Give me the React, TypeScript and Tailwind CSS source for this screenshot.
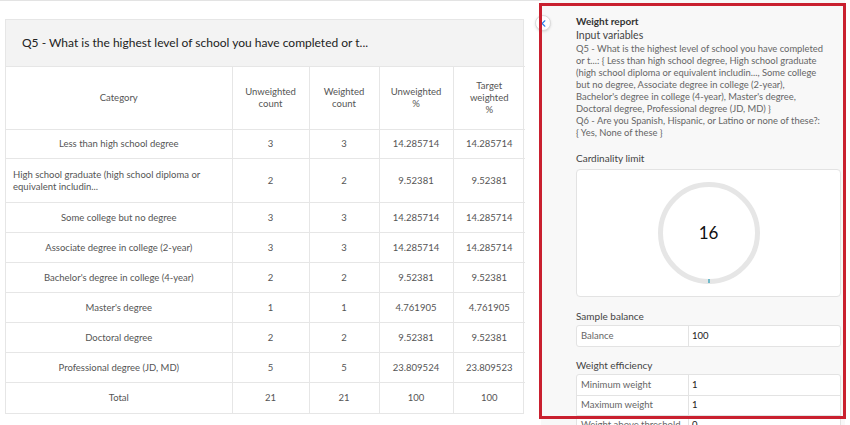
import { ChevronLeft } from "lucide-react";

type Row = {
  label: string;
  uc: string;
  wc: string;
  up: string;
  tp: string;
  h: string;
  left?: boolean;
};

const ROWS: Row[] = [
  { label: "Less than high school degree", uc: "3", wc: "3", up: "14.285714", tp: "14.285714", h: "h-[29px]" },
  {
    label: "High school graduate (high school diploma or equivalent includin...",
    uc: "2",
    wc: "2",
    up: "9.52381",
    tp: "9.52381",
    h: "h-[44px]",
    left: true,
  },
  { label: "Some college but no degree", uc: "3", wc: "3", up: "14.285714", tp: "14.285714", h: "h-[30px]" },
  { label: "Associate degree in college (2-year)", uc: "3", wc: "3", up: "14.285714", tp: "14.285714", h: "h-[30px]" },
  { label: "Bachelor's degree in college (4-year)", uc: "2", wc: "2", up: "9.52381", tp: "9.52381", h: "h-[30px]" },
  { label: "Master's degree", uc: "1", wc: "1", up: "4.761905", tp: "4.761905", h: "h-[30px]" },
  { label: "Doctoral degree", uc: "2", wc: "2", up: "9.52381", tp: "9.52381", h: "h-[30px]" },
  { label: "Professional degree (JD, MD)", uc: "5", wc: "5", up: "23.809524", tp: "23.809523", h: "h-[30px]" },
  { label: "Total", uc: "21", wc: "21", up: "100", tp: "100", h: "h-[30px]" },
];

const INPUT_LINES = [
  "Q5 - What is the highest level of school you have completed",
  "or t...: { Less than high school degree, High school graduate",
  "(high school diploma or equivalent includin..., Some college",
  "but no degree, Associate degree in college (2-year),",
  "Bachelor's degree in college (4-year), Master's degree,",
  "Doctoral degree, Professional degree (JD, MD) }",
  "Q6 - Are you Spanish, Hispanic, or Latino or none of these?:",
  "{ Yes, None of these }",
];

const cell = "border border-[#e6e6e6] text-center align-middle";

function ReportTable() {
  return (
    <div className="ml-[5px] mt-[17px] w-[519px] border border-[#e6e6e6]">
      <div className="flex h-[46px] items-center bg-[#f3f3f3] pl-[16px] text-[12px] text-[#222]">
        Q5 - What is the highest level of school you have completed or t...
      </div>
      <table className="w-full table-fixed border-collapse text-[9.5px] leading-[12px] text-[#555]">
        <colgroup>
          <col className="w-[226px]" />
          <col className="w-[77px]" />
          <col className="w-[70px]" />
          <col className="w-[74px]" />
          <col className="w-[72px]" />
        </colgroup>
        <thead>
          <tr className="h-[63px]">
            <th className={`${cell} border-l-0 font-normal`}>Category</th>
            <th className={`${cell} font-normal`}>
              Unweighted
              <br />
              count
            </th>
            <th className={`${cell} font-normal`}>
              Weighted
              <br />
              count
            </th>
            <th className={`${cell} font-normal`}>
              Unweighted
              <br />%
            </th>
            <th className={`${cell} border-r-0 font-normal`}>
              Target
              <br />
              weighted
              <br />%
            </th>
          </tr>
        </thead>
        <tbody>
          {ROWS.map((r, i) => {
            const last = i === ROWS.length - 1 ? "border-b-0" : "";
            return (
              <tr key={r.label} className={r.h}>
                <td className={`${cell} border-l-0 ${r.left ? "px-[7px] text-left" : ""} ${last}`}>
                  {r.left ? (
                    <>
                      High school graduate (high school diploma or
                      <br />
                      equivalent includin...
                    </>
                  ) : (
                    r.label
                  )}
                </td>
                <td className={`${cell} ${last}`}>{r.uc}</td>
                <td className={`${cell} ${last}`}>{r.wc}</td>
                <td className={`${cell} ${last}`}>{r.up}</td>
                <td className={`${cell} border-r-0 ${last}`}>{r.tp}</td>
              </tr>
            );
          })}
        </tbody>
      </table>
    </div>
  );
}

function KeyValue({ rows }: { rows: [string, string][] }) {
  return (
    <div className="w-[265px] overflow-hidden rounded-[3px] border border-[#e3e3e3] bg-white text-[9.5px]">
      {rows.map(([k, v], i) => (
        <div key={k} className={`flex h-[20px] items-center ${i > 0 ? "border-t border-[#e3e3e3]" : ""}`}>
          <div className="flex h-full w-[112px] items-center border-r border-[#e3e3e3] pl-[4px] text-[#666]">
            {k}
          </div>
          <div className="pl-[3px] text-[#222]">{v}</div>
        </div>
      ))}
    </div>
  );
}

function WeightPanel() {
  return (
    <div className="h-[440px] w-[304px] shrink-0 bg-[#f8f8f8] pl-[35px] pt-[15px]">
      <div className="text-[10px] font-bold leading-[13px] text-[#333]">Weight report</div>
      <div className="text-[10.5px] leading-[14px] text-[#444]">Input variables</div>
      <div className="mt-[1px] text-[9.4px] leading-[12px] whitespace-nowrap text-[#666]">
        {INPUT_LINES.map((l) => (
          <div key={l}>{l}</div>
        ))}
      </div>

      <div className="mt-[12px] text-[10px] leading-[14px] text-[#444]">Cardinality limit</div>
      <div className="mt-[4px] flex h-[128px] w-[265px] items-center justify-center rounded-[4px] border border-[#e3e3e3] bg-white">
        <div className="relative flex h-[104px] w-[104px] items-center justify-center">
          <svg width="104" height="104" viewBox="0 0 104 104" className="absolute inset-0">
            <circle cx="52" cy="52" r="48.5" fill="none" stroke="#e6e6e6" strokeWidth="5" />
            <line x1="52" y1="98" x2="52" y2="102" stroke="#1e9bb8" strokeWidth="1.2" />
          </svg>
          <span className="relative text-[17px] text-[#111]">16</span>
        </div>
      </div>

      <div className="mt-[12px] text-[10px] leading-[14px] text-[#444]">Sample balance</div>
      <div className="mt-[2px]">
        <KeyValue rows={[["Balance", "100"]]} />
      </div>

      <div className="mt-[11px] text-[10px] leading-[14px] text-[#444]">Weight efficiency</div>
      <div className="mt-[2px]">
        <KeyValue
          rows={[
            ["Minimum weight", "1"],
            ["Maximum weight", "1"],
            ["Weight above threshold", "0"],
          ]}
        />
      </div>
    </div>
  );
}

export default function App() {
  return (
    <div
      className="relative flex h-[425px] w-[850px] overflow-hidden bg-white"
      style={{ fontFamily: 'Lato, "Open Sans", sans-serif' }}
    >
      <div className="w-[541px] shrink-0 border-t border-[#e3e3e3] pt-[1px]">
        <ReportTable />
      </div>
      <WeightPanel />

      {/* collapse toggle sits over the panel edge */}
      <button className="absolute left-[535px] top-[15px] flex h-[16px] w-[16px] items-center justify-center rounded-full border border-[#dcdcdc] bg-white shadow-sm">
        <ChevronLeft className="h-[11px] w-[11px] text-[#2b7de9]" strokeWidth={2.4} />
      </button>

      {/* red highlight frame */}
      <div className="pointer-events-none absolute left-[539px] top-[3px] h-[416px] w-[307px] border-[3px] border-[#c9202f]" />
    </div>
  );
}
